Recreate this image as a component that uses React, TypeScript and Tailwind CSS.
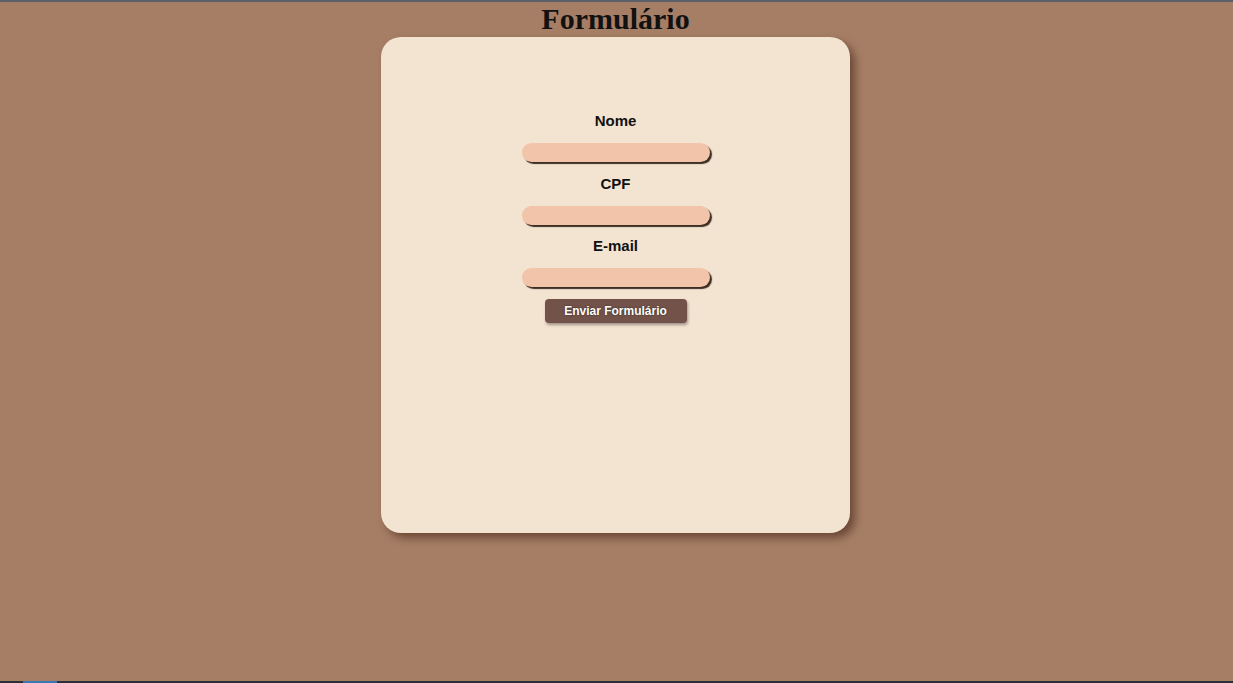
import React from "react";

export default function App() {
  const fields = ["Nome", "CPF", "E-mail"];
  return (
    <div className="h-screen w-full flex flex-col bg-[#a67e66] overflow-hidden">
      <div className="h-[2px] w-full bg-[#5b5f68]" />
      <div className="flex-1 flex flex-col items-center pr-[2px]">
        <h1
          className="text-[30px] leading-[34px] font-bold text-[#111]"
          style={{ fontFamily: '"Liberation Serif", "Times New Roman", serif' }}
        >
          Formulário
        </h1>
        <div className="mt-[1px] w-[469px] h-[496px] rounded-[20px] bg-[#f3e3d1] shadow-[5px_5px_9px_rgba(60,30,15,0.55)] flex flex-col items-center pt-[75px]"
          style={{ fontFamily: '"Liberation Sans", Arial, sans-serif' }}
        >
          {fields.map((f, i) => (
            <div key={f} className={`flex flex-col items-center ${i > 0 ? "mt-[12.5px]" : ""}`}>
              <label className="text-[15px] leading-[18px] font-bold text-[#111]">{f}</label>
              <input
                type="text"
                className="mt-[13px] w-[188px] h-[19px] rounded-full bg-[#f2c4aa] shadow-[2px_2px_1px_rgba(40,25,15,0.9)] outline-none border-0"
              />
            </div>
          ))}
          <button className="mt-[12px] w-[142px] h-[24px] rounded-[4px] bg-[#735349] text-white text-[12px] font-bold shadow-[1px_2px_3px_rgba(0,0,0,0.35)] [text-shadow:0_0_2px_rgba(0,0,0,0.6)]">
            Enviar Formulário
          </button>
        </div>
      </div>
      <div className="h-[2px] w-full bg-[#2b3038] flex">
        <div className="ml-[23px] w-[34px] h-full bg-[#3a78b5]" />
      </div>
    </div>
  );
}
